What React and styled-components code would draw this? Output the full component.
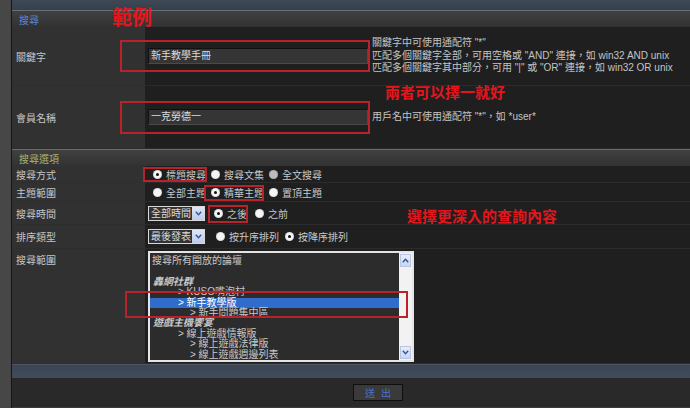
import React from 'react';
import styled, { createGlobalStyle } from 'styled-components';

const Global = createGlobalStyle`
  body {
    margin: 0;
    background: #474747;
    font-family: "Liberation Sans", "Noto Sans CJK TC", sans-serif;
  }
`;

const Page = styled.div`
  position: relative;
  width: 690px;
  height: 408px;
  overflow: hidden;
  padding-left: 11px;
  box-sizing: border-box;
  background: #474747;
`;

const Panel = styled.div`
  border-left: 1px solid #161616;
  background: #1f1f1f;
  height: 100%;
`;

const TopBar = styled.div`
  height: 10px;
  background: linear-gradient(#3f4955, #36404b);
  border-bottom: 1px solid #66707a;
`;

const Header = styled.div`
  height: 16px;
  display: flex;
  align-items: center;
  padding-left: 7px;
  background: linear-gradient(#404040, #323232);
  color: ${p => p.$color || '#5a86d6'};
  font-size: 10px;
  border-top: ${p => p.$line ? '1px solid #6a6a6a' : 'none'};
`;

const Row = styled.div`
  display: flex;
  height: ${p => p.$h}px;
`;

const Label = styled.div`
  width: 133px;
  flex-shrink: 0;
  background: #313131;
  color: #c6c6c6;
  font-size: 10px;
  padding-left: 4px;
  box-sizing: border-box;
  display: flex;
  align-items: ${p => p.$top ? 'flex-start' : 'center'};
  padding-top: ${p => p.$top ? '3px' : '0'};
  border-bottom: 1px solid #2e2e2e;
`;

const Value = styled.div`
  flex: 1;
  display: flex;
  align-items: ${p => p.$top ? 'flex-start' : 'center'};
  padding: ${p => p.$top ? '2px 0 0 3px' : '0 0 0 3px'};
  border-bottom: 1px solid #2b2b2b;
`;

const TextInput = styled.div`
  width: 220px;
  height: 16px;
  box-sizing: border-box;
  background: #353535;
  border: 1px solid #111;
  border-right-color: #4a4a4a;
  border-bottom-color: #4a4a4a;
  color: #dcdcdc;
  font-size: 10px;
  line-height: 14px;
  padding-left: 2px;
  flex-shrink: 0;
`;

const Help = styled.div`
  margin-left: 4px;
  color: #c4c4c4;
  font-size: 10px;
  line-height: 12.5px;
  white-space: nowrap;
`;

const RadioGroup = styled.div`
  display: flex;
  align-items: center;
  gap: ${p => p.$gap || 5}px;
  margin-left: ${p => p.$ml || 5}px;
`;

const RadioItem = styled.label`
  display: flex;
  align-items: center;
  gap: 4px;
  color: #c8c8c8;
  font-size: 10px;
  white-space: nowrap;
`;

const Dot = styled.span`
  width: 9px;
  height: 9px;
  border-radius: 50%;
  background: ${p => p.$disabled ? '#bcbcbc' : '#f5f5f5'};
  box-shadow: inset 0 0 1px #777;
  display: flex;
  align-items: center;
  justify-content: center;
  &::after {
    content: '';
    width: 3px;
    height: 3px;
    border-radius: 50%;
    background: #111;
    display: ${p => p.$checked ? 'block' : 'none'};
  }
`;

const Select = styled.div`
  width: 57px;
  height: 15px;
  box-sizing: border-box;
  border: 1px solid #d8d8d8;
  background: #333;
  display: flex;
  flex-shrink: 0;
`;

const SelectText = styled.span`
  flex: 1;
  color: #dadada;
  font-size: 10px;
  line-height: 13px;
  padding-left: 2px;
`;

const SelectArrow = styled.span`
  width: 12px;
  background: linear-gradient(#dfe6f4, #bccbe6);
  display: flex;
  align-items: center;
  justify-content: center;
`;

const ListBox = styled.div`
  width: 266px;
  height: 111px;
  box-sizing: border-box;
  border: 2px solid #e4e4e4;
  background: #2c2c2c;
  display: flex;
  overflow: hidden;
`;

const ListItems = styled.div`
  flex: 1;
  padding-top: 3px;
`;

const ListItem = styled.div`
  height: 10.4px;
  line-height: 10.4px;
  font-size: 10px;
  white-space: nowrap;
  padding-left: ${p => p.$indent}px;
  color: ${p => p.$sel ? '#fff' : '#c8c8c8'};
  background: ${p => p.$sel ? '#2f6ccc' : 'transparent'};
  font-weight: ${p => p.$group ? 700 : 400};
  font-style: ${p => p.$group ? 'italic' : 'normal'};
`;

const Scroll = styled.div`
  width: 13px;
  background: #f2f2f2;
  display: flex;
  flex-direction: column;
  justify-content: space-between;
  padding: 1px 0;
`;

const ScrollBtn = styled.div`
  height: 11px;
  margin: 0 1px;
  background: linear-gradient(#e8eef8, #c9d6ee);
  border: 1px solid #b7c6e2;
  display: flex;
  align-items: center;
  justify-content: center;
`;

const BottomBar = styled.div`
  height: 13px;
  background: linear-gradient(#3b4553, #414c5b);
  border-top: 1px solid #4d5560;
`;

const Footer = styled.div`
  height: 29px;
  background: #292929;
  border-bottom: 1px solid #3c3c3c;
  display: flex;
  align-items: center;
  padding-left: 341px;
`;

const Submit = styled.button`
  width: 50px;
  height: 17px;
  padding: 0;
  background: #3a3a3a;
  border: 1px solid #0e0e0e;
  color: #4e74c8;
  font-size: 10px;
  font-family: inherit;
  letter-spacing: 6px;
  text-indent: 6px;
`;

const Mark = styled.div`
  position: absolute;
  left: ${p => p.$x}px;
  top: ${p => p.$y}px;
  width: ${p => p.$w}px;
  height: ${p => p.$h}px;
  box-sizing: border-box;
  border: 2px solid #b8222a;
  pointer-events: none;
`;

const Note = styled.div`
  position: absolute;
  left: ${p => p.$x}px;
  top: ${p => p.$y}px;
  color: #e3161d;
  font-size: ${p => p.$size}px;
  font-weight: 700;
  font-family: "Noto Sans CJK TC", sans-serif;
  line-height: 1;
  white-space: nowrap;
`;

const Chevron = ({ up }) => (
  <svg width="7" height="5" viewBox="0 0 7 5">
    <path d={up ? 'M0.8 4.2 L3.5 1.2 L6.2 4.2' : 'M0.8 0.8 L3.5 3.8 L6.2 0.8'} fill="none" stroke="#2d56a8" strokeWidth="1.4" />
  </svg>
);

const Radio = ({ children, checked, disabled }) => (
  <RadioItem>
    <Dot $checked={checked} $disabled={disabled} />
    {children}
  </RadioItem>
);

const Dropdown = ({ children }) => (
  <Select>
    <SelectText>{children}</SelectText>
    <SelectArrow><Chevron /></SelectArrow>
  </Select>
);

const forums = [
  { t: '搜尋所有開放的論壇', i: 2 },
  { t: '\u00a0', i: 2 },
  { t: '轟網社群', i: 3, g: true },
  { t: '> KUSO嘴泡村', i: 28 },
  { t: '> 新手教學版', i: 28, s: true },
  { t: '> 新手問題集中區', i: 40 },
  { t: '遊戲主機饗宴', i: 3, g: true },
  { t: '> 線上遊戲情報版', i: 28 },
  { t: '> 線上遊戲法律版', i: 40 },
  { t: '> 線上遊戲週邊列表', i: 40 },
];

export default function App() {
  return (
    <Page>
      <Global />
      <Panel>
        <TopBar />
        <Header>搜尋</Header>
        <Row $h={59}>
          <Label>關鍵字</Label>
          <Value>
            <TextInput>新手教學手冊</TextInput>
            <Help>
              關鍵字中可使用通配符 "*"<br />
              匹配多個關鍵字全部，可用空格或 "AND" 連接，如 win32 AND unix<br />
              匹配多個關鍵字其中部分，可用 "|" 或 "OR" 連接，如 win32 OR unix
            </Help>
          </Value>
        </Row>
        <Row $h={63}>
          <Label>會員名稱</Label>
          <Value>
            <TextInput>一克勞德一</TextInput>
            <Help>用戶名中可使用通配符 "*"，如 *user*</Help>
          </Value>
        </Row>
        <Header $color="#aeb06c" $line>搜尋選項</Header>
        <Row $h={17}>
          <Label>搜尋方式</Label>
          <Value>
            <RadioGroup>
              <Radio checked>標題搜尋</Radio>
              <Radio>搜尋文集</Radio>
              <Radio disabled>全文搜尋</Radio>
            </RadioGroup>
          </Value>
        </Row>
        <Row $h={19}>
          <Label>主題範圍</Label>
          <Value>
            <RadioGroup>
              <Radio>全部主題</Radio>
              <Radio checked>精華主題</Radio>
              <Radio>置頂主題</Radio>
            </RadioGroup>
          </Value>
        </Row>
        <Row $h={23}>
          <Label>搜尋時間</Label>
          <Value>
            <Dropdown>全部時間</Dropdown>
            <RadioGroup $ml={9} $gap={8}>
              <Radio checked>之後</Radio>
              <Radio>之前</Radio>
            </RadioGroup>
          </Value>
        </Row>
        <Row $h={24}>
          <Label>排序類型</Label>
          <Value>
            <Dropdown>最後發表</Dropdown>
            <RadioGroup $ml={11} $gap={6}>
              <Radio>按升序排列</Radio>
              <Radio checked>按降序排列</Radio>
            </RadioGroup>
          </Value>
        </Row>
        <Row $h={115}>
          <Label $top>搜尋範圍</Label>
          <Value $top>
            <ListBox>
              <ListItems>
                {forums.map((f, k) => (
                  <ListItem key={k} $indent={f.i} $group={f.g} $sel={f.s}>{f.t}</ListItem>
                ))}
              </ListItems>
              <Scroll>
                <ScrollBtn><Chevron up /></ScrollBtn>
                <ScrollBtn><Chevron /></ScrollBtn>
              </Scroll>
            </ListBox>
          </Value>
        </Row>
        <BottomBar />
        <Footer>
          <Submit>送出</Submit>
        </Footer>
      </Panel>

      <Note $x={112} $y={7} $size={20}>範例</Note>
      <Note $x={385} $y={84} $size={15}>兩者可以擇一就好</Note>
      <Note $x={407} $y={208} $size={15}>選擇更深入的查詢內容</Note>

      <Mark $x={120} $y={40} $w={250} $h={32} />
      <Mark $x={120} $y={101} $w={250} $h={33} />
      <Mark $x={143} $y={167} $w={64} $h={15} />
      <Mark $x={204} $y={185} $w={60} $h={16} />
      <Mark $x={208} $y={205} $w={40} $h={18} />
      <Mark $x={125} $y={291} $w={283} $h={27} />
    </Page>
  );
}
